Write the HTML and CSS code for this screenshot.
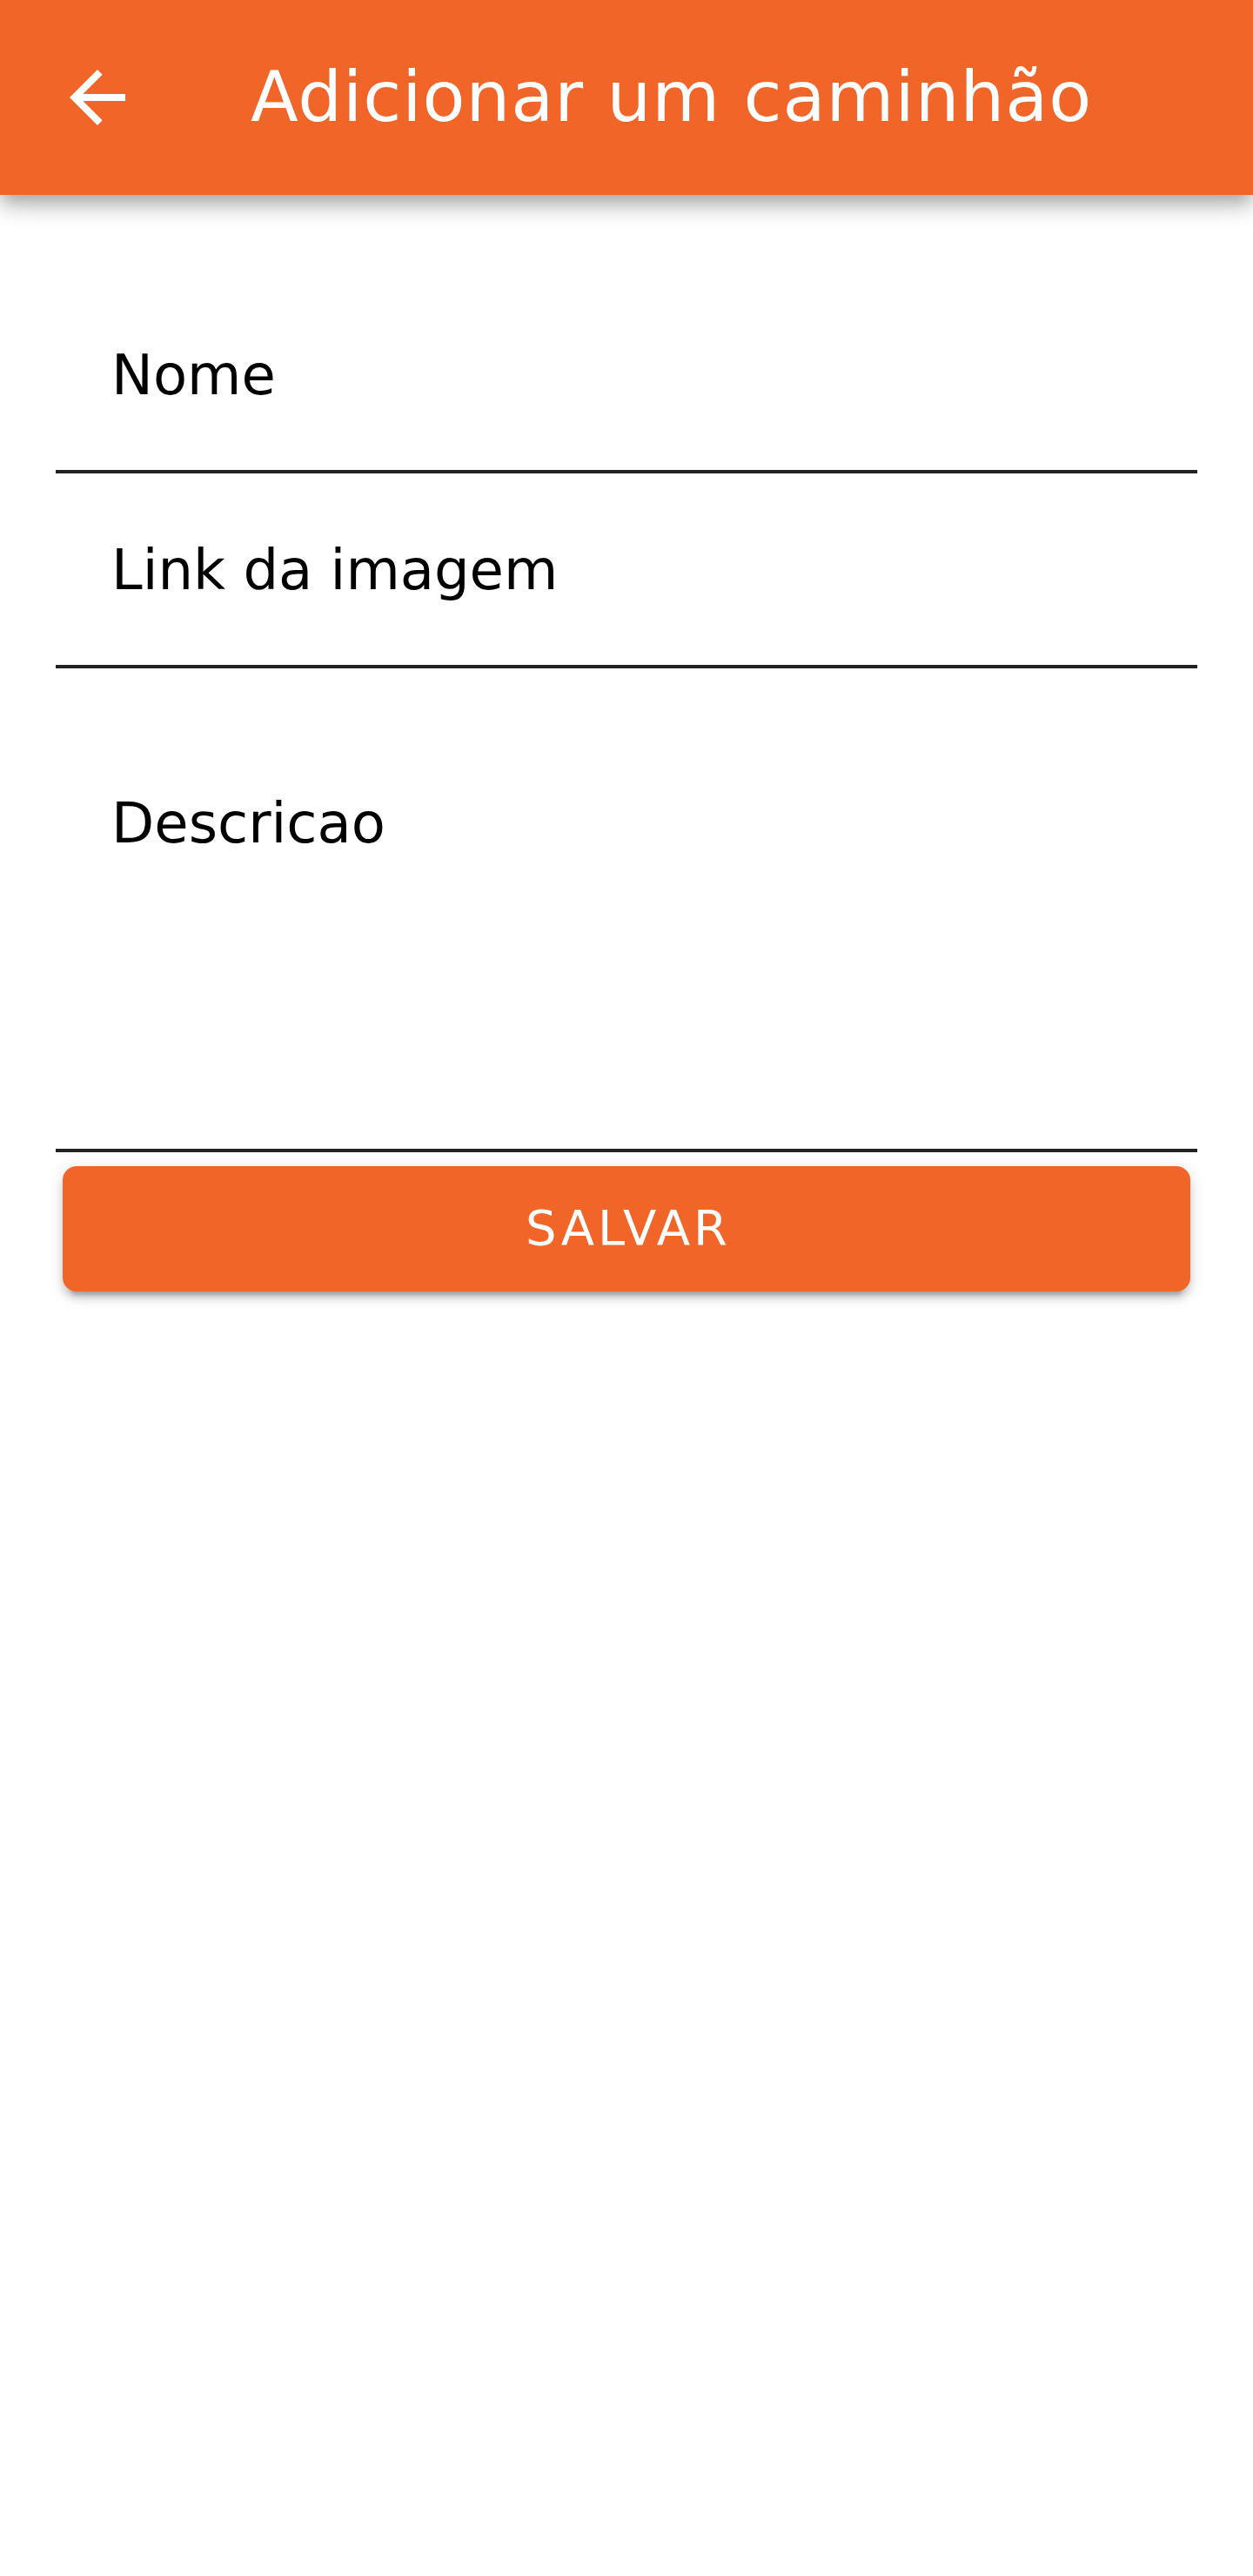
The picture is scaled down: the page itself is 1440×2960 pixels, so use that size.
FILE: index.html
```html
<!DOCTYPE html>
<html lang="pt">
<head>
<meta charset="utf-8">
<title>Adicionar um caminhão</title>
<link rel="stylesheet" href="styles.css">
</head>
<body>
<header class="appbar">
  <button class="back" aria-label="Voltar">
    <svg viewBox="0 0 24 24" width="96" height="96"><path fill="#fff" d="M20 11H7.83l5.59-5.59L12 4l-8 8 8 8 1.41-1.41L7.83 13H20v-2z"/></svg>
  </button>
  <h1 class="title">Adicionar um caminhão</h1>
</header>
<main class="form">
  <div class="field"><span class="label">Nome</span></div>
  <div class="field"><span class="label">Link da imagem</span></div>
  <div class="field field-multi"><span class="label">Descricao</span></div>
  <button class="save">SALVAR</button>
</main>
</body>
</html>
```

FILE: styles.css
```css
html, body {
  margin: 0;
  padding: 0;
  background: #fff;
}
body {
  font-family: "DejaVu Sans", "Liberation Sans", sans-serif;
  width: 1440px;
  min-height: 2960px;
}
.appbar {
  position: relative;
  z-index: 1;
  height: 224px;
  background: #f26529;
  display: flex;
  align-items: center;
  box-shadow: 0 8px 16px -4px rgba(0,0,0,.2), 0 16px 20px 0 rgba(0,0,0,.14), 0 4px 40px 0 rgba(0,0,0,.12);
}
.back {
  width: 224px;
  height: 224px;
  flex: 0 0 224px;
  border: 0;
  padding: 0;
  background: transparent;
  display: flex;
  align-items: center;
  justify-content: center;
}
.back svg { display: block; }
.title {
  margin: 0 0 0 64px;
  font-size: 80px;
  line-height: 80px;
  font-weight: normal;
  letter-spacing: 1px;
  color: #fff;
  white-space: nowrap;
}
.form {
  padding: 96px 64px 0;
  display: flex;
  flex-direction: column;
}
.field {
  padding: 79px 64px 77px;
  border-bottom: 4px solid #222;
}
.field-multi {
  padding-top: 146px;
  padding-bottom: 342px;
}
.label {
  display: block;
  font-size: 64px;
  line-height: 64px;
  color: #000;
}
.save {
  margin: 16px 8px 0;
  height: 144px;
  border: 0;
  border-radius: 16px;
  background: #f26529;
  color: #fff;
  font-family: "DejaVu Sans", "Liberation Sans", sans-serif;
  font-size: 56px;
  line-height: 56px;
  letter-spacing: 4px;
  padding: 0 0 2px 4px;
  box-shadow: 0 12px 4px -8px rgba(0,0,0,.2), 0 8px 8px 0 rgba(0,0,0,.14), 0 4px 20px 0 rgba(0,0,0,.12);
}
```
